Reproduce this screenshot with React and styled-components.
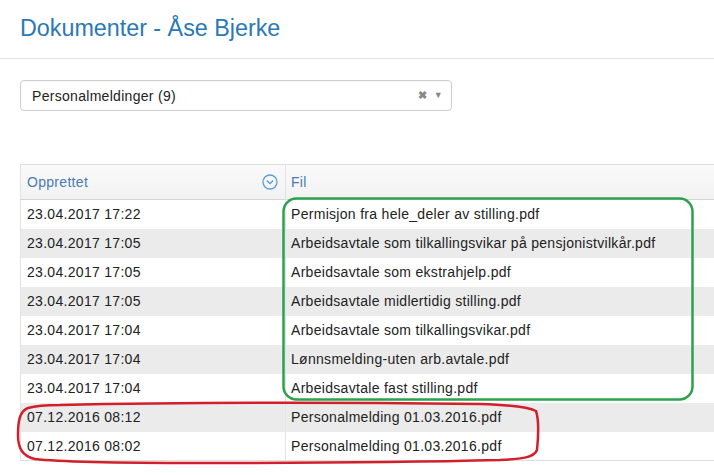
import React from "react";
import styled, { createGlobalStyle } from "styled-components";

const Global = createGlobalStyle`
  html, body { margin: 0; padding: 0; background: #fff; overflow: hidden; }
  body { font-family: "Liberation Sans", Arial, sans-serif; color: #222; }
`;

const Page = styled.div`
  position: relative;
  width: 714px;
  height: 475px;
  overflow: hidden;
`;

const Header = styled.header`
  padding: 15px 20px 0;
  height: 43px;
  border-bottom: 1px solid #e3e3e3;
`;

const Title = styled.h1`
  margin: 0;
  font-size: 23.3px;
  line-height: 26px;
  font-weight: normal;
  color: #2a78b6;
`;

const Body = styled.main`
  padding: 21px 20px 0;
`;

const Select = styled.div`
  box-sizing: border-box;
  width: 432px;
  height: 31px;
  border: 1px solid #cfcfcf;
  border-radius: 4px;
  display: flex;
  align-items: center;
  padding: 0 8px 0 11px;
  font-size: 14px;
  letter-spacing: 0.3px;
  color: #222;
  box-shadow: inset 0 1px 1px rgba(0,0,0,0.04);
`;

const SelectText = styled.span`
  flex: 1;
`;

const SelectCtl = styled.span`
  color: #888;
  font-size: ${p => p.$size}px;
  margin-left: ${p => p.$gap}px;
  line-height: 1;
  font-weight: bold;
`;

const Table = styled.table`
  margin-top: 53px;
  width: 780px;
  border-collapse: collapse;
  font-size: 14px;
  letter-spacing: 0.3px;
  border-left: 1px solid #e2e2e2;
  border-top: 1px solid #dedede;
  border-bottom: 1px solid #dedede;
`;

const HeadRow = styled.tr`
  height: 35px;
  background: linear-gradient(#fafafa, #f2f2f2);
  border-bottom: 1px solid #d6d6d6;
`;

const Th = styled.th`
  text-align: left;
  font-weight: normal;
  color: #4a7ab5;
  padding: 0 7px 0 ${p => (p.$first ? 6 : 5)}px;
  width: ${p => p.$w || "auto"};
  border-left: ${p => (p.$first ? "none" : "1px solid #e4e4e4")};
`;

const ThInner = styled.div`
  display: flex;
  align-items: center;
  justify-content: space-between;
`;

const Row = styled.tr`
  height: 29px;
  background: ${p => (p.$alt ? "#ebebeb" : "#fff")};
`;

const Td = styled.td`
  padding: 0 7px 0 ${p => (p.$first ? 6 : 5)}px;
  color: #222;
  white-space: nowrap;
  border-left: ${p => (p.$first ? "none" : "1px solid #e4e4e4")};
`;

const Overlay = styled.svg`
  position: absolute;
  left: 0;
  top: 0;
  pointer-events: none;
`;

const rows = [
  ["23.04.2017 17:22", "Permisjon fra hele_deler av stilling.pdf"],
  ["23.04.2017 17:05", "Arbeidsavtale som tilkallingsvikar på pensjonistvilkår.pdf"],
  ["23.04.2017 17:05", "Arbeidsavtale som ekstrahjelp.pdf"],
  ["23.04.2017 17:05", "Arbeidsavtale midlertidig stilling.pdf"],
  ["23.04.2017 17:04", "Arbeidsavtale som tilkallingsvikar.pdf"],
  ["23.04.2017 17:04", "Lønnsmelding-uten arb.avtale.pdf"],
  ["23.04.2017 17:04", "Arbeidsavtale fast stilling.pdf"],
  ["07.12.2016 08:12", "Personalmelding 01.03.2016.pdf"],
  ["07.12.2016 08:02", "Personalmelding 01.03.2016.pdf"],
];

const SortIcon = () => (
  <svg width="16" height="16" viewBox="0 0 16 16">
    <circle cx="8" cy="8" r="7" fill="none" stroke="#5aa0d8" strokeWidth="1.3" />
    <path d="M4.8 6.6 L8 9.6 L11.2 6.6" fill="none" stroke="#5aa0d8" strokeWidth="1.4" />
  </svg>
);

export default function App() {
  return (
    <Page>
      <Global />
      <Header>
        <Title>Dokumenter - Åse Bjerke</Title>
      </Header>
      <Body>
        <Select>
          <SelectText>Personalmeldinger (9)</SelectText>
          <SelectCtl $size={11} $gap={0}>✖</SelectCtl>
          <SelectCtl $size={9} $gap={6}>▼</SelectCtl>
        </Select>
        <Table>
          <thead>
            <HeadRow>
              <Th $first $w="251px">
                <ThInner>
                  <span>Opprettet</span>
                  <SortIcon />
                </ThInner>
              </Th>
              <Th>Fil</Th>
            </HeadRow>
          </thead>
          <tbody>
            {rows.map(([d, f], i) => (
              <Row key={i} $alt={i % 2 === 1}>
                <Td $first>{d}</Td>
                <Td>{f}</Td>
              </Row>
            ))}
          </tbody>
        </Table>
      </Body>
      <Overlay width="714" height="475" viewBox="0 0 714 475">
        <rect x="283.5" y="198.5" width="409" height="201" rx="13" fill="none" stroke="#2ba24c" strokeWidth="2.5" />
        <path
          d="M60 405 C 150 403, 300 402, 480 404 C 510 405, 528 407, 536 411 C 539 420, 538 440, 537 450 C 534 458, 520 459, 500 460 C 420 462, 300 463, 200 463 C 120 463, 60 462, 35 459 C 22 456, 18 448, 18 435 C 18 420, 20 411, 28 408 C 38 405, 50 405, 60 405 Z"
          fill="none"
          stroke="#d31f2b"
          strokeWidth="2.5"
        />
      </Overlay>
    </Page>
  );
}
